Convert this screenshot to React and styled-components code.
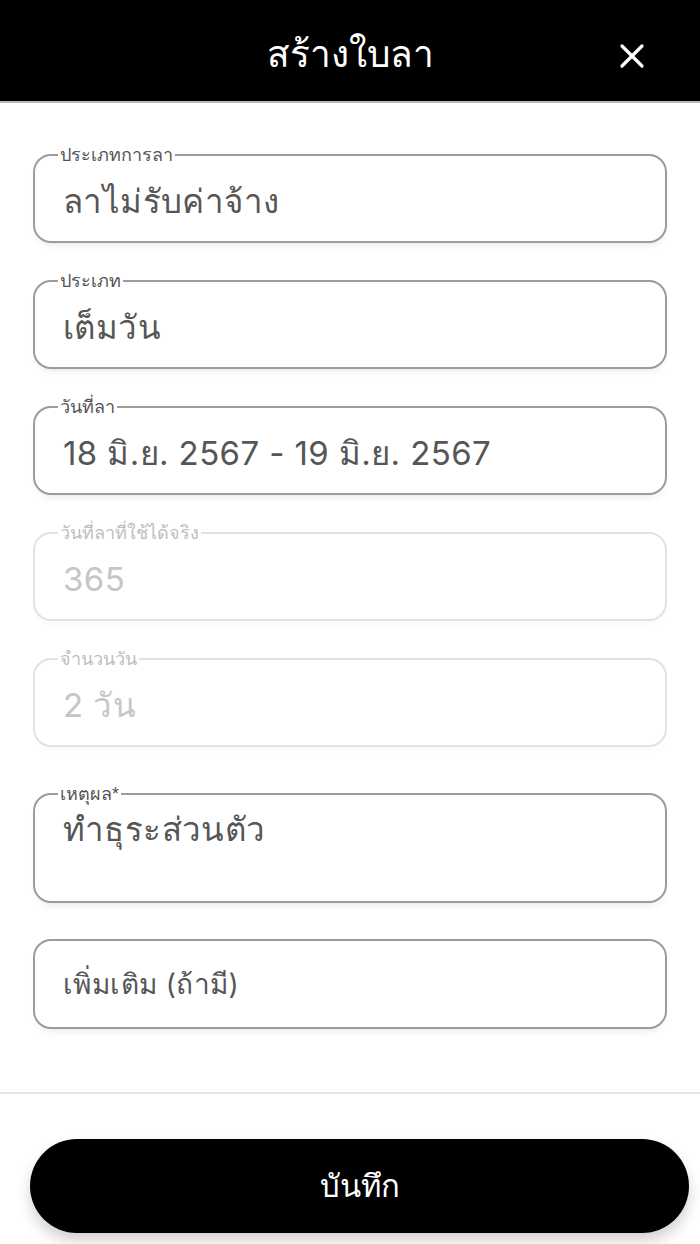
import React from 'react';
import styled, { createGlobalStyle } from 'styled-components';

const GlobalStyle = createGlobalStyle`
  html, body {
    margin: 0;
    padding: 0;
    background: #ffffff;
  }
  body {
    font-family: "Liberation Sans", "Noto Sans", sans-serif;
  }
`;

const Page = styled.div`
  width: 700px;
  min-height: 1244px;
  display: flex;
  flex-direction: column;
  background: #fff;
`;

const Header = styled.header`
  height: 103px;
  padding-top: 8px;
  background: #000;
  border-bottom: 2px solid #b9b9b9;
  display: flex;
  align-items: center;
  justify-content: center;
  position: relative;
  box-sizing: border-box;
`;

const Title = styled.h1`
  margin: 0;
  color: #fff;
  font-size: 37px;
  font-weight: 500;
  line-height: 1;
`;

const CloseButton = styled.button`
  position: absolute;
  right: 52px;
  top: 40px;
  width: 32px;
  height: 32px;
  padding: 0;
  border: none;
  background: transparent;
  display: flex;
  align-items: center;
  justify-content: center;
`;

const Form = styled.form`
  display: flex;
  flex-direction: column;
  gap: 27px;
  padding: 41px 33px 63px;
  border-bottom: 2px solid #e6e6e6;
`;

const Field = styled.fieldset`
  margin: 0;
  margin-top: ${p => (p.$tall ? '9px' : p.$plain ? '9px' : '0')};
  padding: 0 28px;
  border: 2px solid ${p => (p.$disabled ? '#e2e2e2' : '#9c9c9c')};
  border-radius: 18px;
  min-width: 0;
  box-shadow: 0 6px 10px -6px rgba(0, 0, 0, ${p => (p.$disabled ? 0.06 : 0.14)});
`;

const Legend = styled.legend`
  margin-left: -5px;
  padding: 0 2px;
  font-size: 18px;
  line-height: 22px;
  color: ${p => (p.$disabled ? '#bdbdbd' : '#555')};
`;

const Value = styled.div`
  padding: ${p => (p.$tall ? '4px 0 52px' : p.$plain ? '23px 0' : '15px 0 20px')};
  font-family: Inter, "Liberation Sans", "Noto Sans", sans-serif;
  font-size: ${p => (p.$plain ? '28px' : '33px')};
  line-height: 40px;
  letter-spacing: 0.4px;
  color: ${p => (p.$disabled ? '#c6c6c6' : '#565656')};
  white-space: nowrap;
`;

const Footer = styled.div`
  padding: 45px 11px 12px 30px;
`;

const SaveButton = styled.button`
  width: 100%;
  height: 94px;
  border: none;
  border-radius: 47px;
  background: #000;
  color: #fff;
  font-family: inherit;
  font-size: 31px;
  font-weight: 500;
  box-shadow: 0 8px 14px rgba(0, 0, 0, 0.18);
`;

const fields = [
  { label: 'ประเภทการลา', value: 'ลาไม่รับค่าจ้าง' },
  { label: 'ประเภท', value: 'เต็มวัน' },
  { label: 'วันที่ลา', value: '18 มิ.ย. 2567 - 19 มิ.ย. 2567' },
  { label: 'วันที่ลาที่ใช้ได้จริง', value: '365', disabled: true },
  { label: 'จำนวนวัน', value: '2 วัน', disabled: true },
  { label: 'เหตุผล*', value: 'ทำธุระส่วนตัว', tall: true },
  { value: 'เพิ่มเติม (ถ้ามี)', plain: true },
];

const App = () => {
  return (
    <Page>
      <GlobalStyle />
      <Header>
        <Title>สร้างใบลา</Title>
        <CloseButton aria-label="close">
          <svg width="26" height="26" viewBox="0 0 26 26">
            <path d="M3 3 L23 23 M23 3 L3 23" stroke="#fff" strokeWidth="3.2" strokeLinecap="round" />
          </svg>
        </CloseButton>
      </Header>
      <Form>
        {fields.map((f, i) => (
          <Field key={i} $disabled={f.disabled} $tall={f.tall} $plain={f.plain}>
            {f.label && <Legend $disabled={f.disabled}>{f.label}</Legend>}
            <Value $disabled={f.disabled} $tall={f.tall} $plain={f.plain}>{f.value}</Value>
          </Field>
        ))}
      </Form>
      <Footer>
        <SaveButton type="button">บันทึก</SaveButton>
      </Footer>
    </Page>
  );
};

export default App;
